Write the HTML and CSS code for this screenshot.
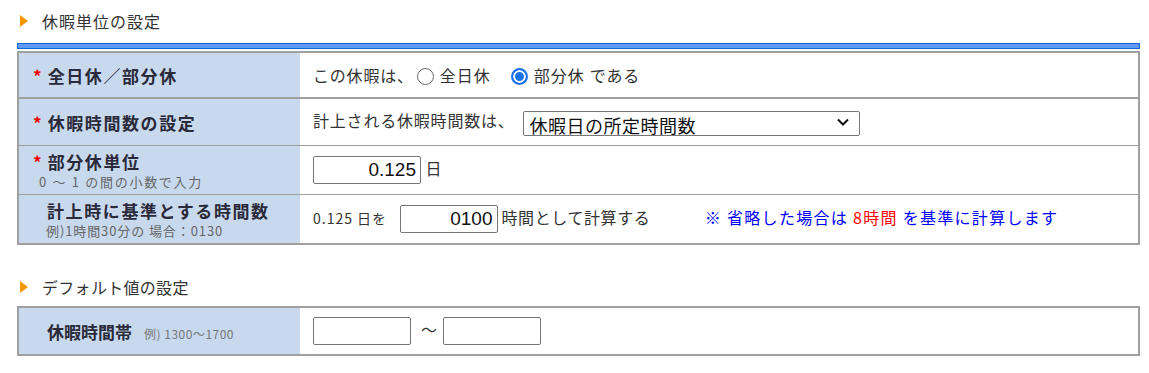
FILE: index.html
```html
<!DOCTYPE html>
<html lang="ja">
<head>
    <meta charset="UTF-8">
    <title>休暇単位の設定</title>
    <link rel="stylesheet" href="styles.css">
</head>
<body>
    <div class="page">
        <h2 class="section-title">休暇単位の設定</h2>
        <div class="blue-bar"></div>
        <table class="form-table">
            <tr class="row-first">
                <th><span class="req">*</span>全日休／部分休</th>
                <td>
                    この休暇は、<label class="radio"><input type="radio" name="unit">全日休</label><label class="radio"><input type="radio" name="unit" checked>部分休</label>である
                </td>
            </tr>
            <tr>
                <th><span class="req">*</span>休暇時間数の設定</th>
                <td>
                    計上される休暇時間数は、<span class="select-wrap">
                        <select class="hours-select">
                            <option>休暇日の所定時間数</option>
                            <option>指定時間数</option>
                        </select>
                        <svg class="chevron" width="12" height="8" viewBox="0 0 12 8"><path d="M1 1.5 L6 6.5 L11 1.5" fill="none" stroke="#111" stroke-width="2"/></svg>
                    </span>
                </td>
            </tr>
            <tr class="row-tall">
                <th>
                    <div><span class="req">*</span>部分休単位</div>
                    <div class="hint">0 ～ 1 の間の小数で入力</div>
                </th>
                <td><input class="num-input unit-input" type="text" value="0.125"> 日</td>
            </tr>
            <tr class="row-tall">
                <th class="no-req">
                    <div>計上時に基準とする時間数</div>
                    <div class="hint">例)1時間30分の 場合：0130</div>
                </th>
                <td>
                    <span class="small-text">0.125 日を</span>
                    <input class="num-input base-input" type="text" value="0100"><span class="mid-text">時間として計算する</span>
                    <span class="note">※ 省略した場合は <em>8時間</em> を基準に計算します</span>
                </td>
            </tr>
        </table>

        <h2 class="section-title second">デフォルト値の設定</h2>
        <table class="form-table">
            <tr>
                <th class="no-req plain">休暇時間帯<span class="example">例) 1300〜1700</span></th>
                <td>
                    <input class="num-input range-input" type="text"><span class="tilde">〜</span><input class="num-input range-input" type="text">
                </td>
            </tr>
        </table>
    </div>
</body>
</html>
```

FILE: styles.css
```css
body {
    margin: 0;
    font-family: "Noto Sans CJK JP", "Liberation Sans", sans-serif;
    color: #333;
    background: white;
}

.page {
    padding: 9px 9px 0 17px;
}

.section-title {
    display: flex;
    align-items: center;
    margin: 0;
    height: 24px;
    font-size: 16px;
    font-weight: normal;
    letter-spacing: 1px;
    color: #333;
}

.section-title::before {
    content: "";
    width: 0;
    height: 0;
    margin: 0 14px 0 3px;
    border-top: 6px solid transparent;
    border-bottom: 6px solid transparent;
    border-left: 8px solid #f39800;
}

.section-title.second {
    margin-top: 30px;
    margin-bottom: 7px;
    letter-spacing: 0.3px;
}

.blue-bar {
    height: 4px;
    margin-top: 10px;
    background: #5d9cf2;
    border: 1px solid #1565d8;
}

.form-table {
    width: 1123px;
    margin-top: 2px;
    border-collapse: collapse;
    border: 2px solid #a0a0a0;
}

.form-table th,
.form-table td {
    border-top: 1px solid #a0a0a0;
    height: 46px;
    padding: 0;
    font-size: 16px;
}

.form-table tr.row-first th,
.form-table tr.row-first td {
    border-bottom: 2px solid #a0a0a0;
    height: 44px;
}

.form-table th {
    width: 282px;
    background: #c8d9ee;
    text-align: left;
    padding-left: 14px;
    font-size: 17px;
    letter-spacing: 1.6px;
    font-weight: bold;
    color: #2a2a3a;
    box-sizing: border-box;
}

.form-table th.no-req {
    padding-left: 28px;
}

.form-table th.plain {
    letter-spacing: 0;
}

.form-table td {
    padding-left: 13px;
    letter-spacing: 0.8px;
}

.form-table tr.row-tall th,
.form-table tr.row-tall td {
    height: 48px;
}

.req {
    color: #e00;
    margin-right: 6px;
    font-size: 17px;
    letter-spacing: 0;
}

.hint {
    font-size: 13px;
    font-weight: normal;
    letter-spacing: 1.7px;
    color: #666;
    margin-top: -2px;
    padding-left: 6px;
}

.no-req .hint {
    padding-left: 0;
    margin-left: -1px;
    letter-spacing: 0.9px;
}

.example {
    font-size: 12px;
    font-weight: normal;
    letter-spacing: 0.5px;
    color: #777;
    margin-left: 12px;
}

.radio {
    margin-left: 3px;
    margin-right: 12px;
    letter-spacing: 1px;
}

.radio input {
    appearance: none;
    width: 17px;
    height: 17px;
    margin: 0 6px 0 0;
    border: 1px solid #666;
    border-radius: 50%;
    vertical-align: -3px;
    background: white;
}

.radio input:checked {
    border: 2px solid #1a73e8;
    box-shadow: inset 0 0 0 2px white;
    background: #1a73e8;
}

.radio + .radio {
    margin-left: 8px;
    margin-right: 5px;
}

.select-wrap {
    position: relative;
    display: inline-block;
    vertical-align: middle;
    margin-left: 8px;
}

.hours-select {
    appearance: none;
    width: 337px;
    height: 25px;
    font-family: "Noto Sans CJK JP", sans-serif;
    font-size: 18px;
    letter-spacing: 0.5px;
    color: #111;
    border: 1px solid #767676;
    border-radius: 2px;
    background: white;
    padding: 0 6px;
    vertical-align: middle;
}

.chevron {
    position: absolute;
    right: 11px;
    top: 9px;
    pointer-events: none;
}

.num-input {
    height: 28px;
    box-sizing: border-box;
    border: 1px solid #767676;
    border-radius: 2px;
    text-align: right;
    font-family: "Liberation Sans", sans-serif;
    font-size: 19px;
    letter-spacing: 0;
    color: #111;
    padding: 0 4px;
    vertical-align: middle;
}

.unit-input {
    width: 108px;
}

.base-input {
    width: 98px;
    margin: 0 4px 0 8px;
}

.range-input {
    width: 98px;
    text-align: left;
}

.small-text {
    font-size: 14px;
    letter-spacing: 1px;
}

.mid-text {
    font-size: 16px;
    letter-spacing: 0.6px;
}

.note {
    color: #0000ff;
    font-size: 16px;
    letter-spacing: 1.3px;
    margin-left: 50px;
}

.note em {
    font-style: normal;
    color: #f00;
}

.tilde {
    margin: 0 5px 0 10px;
}
```
